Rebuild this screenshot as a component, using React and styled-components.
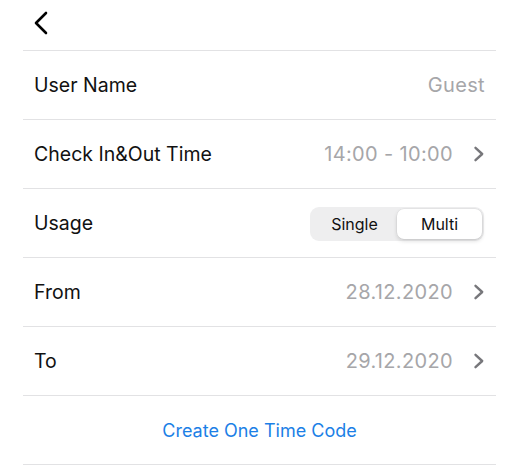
import React, { useState } from "react";
import styled, { createGlobalStyle } from "styled-components";

const Global = createGlobalStyle`
  html, body { margin: 0; padding: 0; background: #ffffff; }
  body { font-family: Inter, "Noto Sans", "Liberation Sans", sans-serif; -webkit-font-smoothing: antialiased; }
`;

const Page = styled.div`
  width: 516px;
  padding: 0 20px 0 23px;
  box-sizing: border-box;
`;

const Header = styled.div`
  height: 50px;
  display: flex;
  align-items: center;
  border-bottom: 1px solid #e2e2e4;
`;

const BackButton = styled.button`
  border: 0;
  background: none;
  padding: 0;
  margin: 0 0 5px 10px;
  display: flex;
  cursor: pointer;
`;

const Row = styled.div`
  height: 68px;
  display: flex;
  align-items: center;
  justify-content: ${(p) => (p.$center ? "center" : "space-between")};
  padding: 0 11px;
  border-bottom: 1px solid #e2e2e4;
`;

const Label = styled.span`
  font-size: 19.5px;
  color: #111111;
`;

const Value = styled.span`
  display: flex;
  align-items: center;
  gap: 20px;
  font-size: 20px;
  letter-spacing: 0.35px;
  color: #a6a6a9;
`;

const Chevron = styled.svg`
  width: 12px;
  height: 16px;
`;

const Segmented = styled.div`
  display: flex;
  width: 174px;
  height: 34px;
  box-sizing: border-box;
  padding: 2px;
  border-radius: 9px;
  background: #eeeeef;
  margin: 2px 1px 0 0;
`;

const Segment = styled.button`
  flex: 1;
  border: 0;
  border-radius: 7px;
  font-family: inherit;
  font-size: 16px;
  color: #111111;
  background: ${(p) => (p.$active ? "#ffffff" : "transparent")};
  box-shadow: ${(p) => (p.$active ? "0 0 0 0.5px rgba(0,0,0,0.06), 0 2px 4px rgba(0,0,0,0.14)" : "none")};
  cursor: pointer;
  padding: 0;
`;

const LinkButton = styled.button`
  border: 0;
  background: none;
  font-family: inherit;
  font-size: 18px;
  color: #1c7fe6;
  cursor: pointer;
  padding: 0;
`;

const ChevronRight = () => (
  <Chevron viewBox="0 0 12 16">
    <path d="M2.5 1.8 L9.2 8 L2.5 14.2" fill="none" stroke="#77777b" strokeWidth="2.4" strokeLinecap="round" strokeLinejoin="round" />
  </Chevron>
);

export default function App() {
  const [usage, setUsage] = useState("Multi");
  return (
    <>
      <Global />
      <Page>
        <Header>
          <BackButton aria-label="Back">
            <svg width="16" height="24" viewBox="0 0 16 24">
              <path d="M13 2 L3 12 L13 22" fill="none" stroke="#000" strokeWidth="2.6" strokeLinecap="round" strokeLinejoin="round" />
            </svg>
          </BackButton>
        </Header>
        <Row>
          <Label>User Name</Label>
          <Value>Guest</Value>
        </Row>
        <Row>
          <Label>Check In&amp;Out Time</Label>
          <Value>
            14:00 - 10:00
            <ChevronRight />
          </Value>
        </Row>
        <Row>
          <Label>Usage</Label>
          <Segmented>
            {["Single", "Multi"].map((s) => (
              <Segment key={s} $active={usage === s} onClick={() => setUsage(s)}>
                {s}
              </Segment>
            ))}
          </Segmented>
        </Row>
        <Row>
          <Label>From</Label>
          <Value>
            28.12.2020
            <ChevronRight />
          </Value>
        </Row>
        <Row>
          <Label>To</Label>
          <Value>
            29.12.2020
            <ChevronRight />
          </Value>
        </Row>
        <Row $center>
          <LinkButton>Create One Time Code</LinkButton>
        </Row>
      </Page>
    </>
  );
}
